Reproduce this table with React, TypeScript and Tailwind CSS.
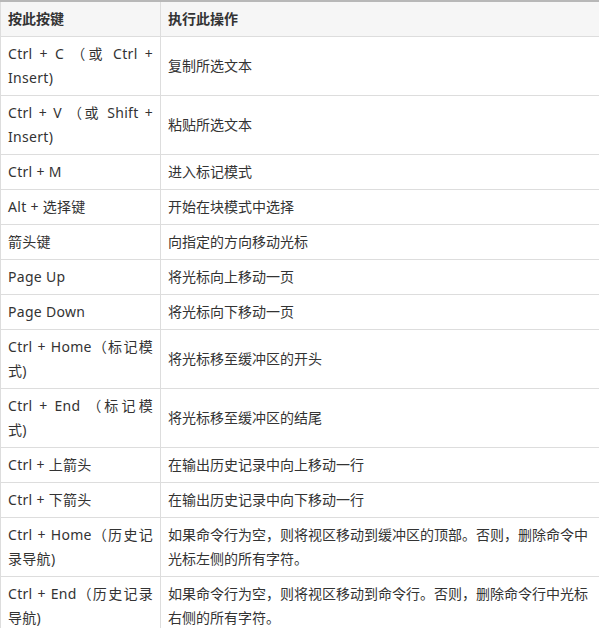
import React from 'react';

interface Shortcut {
  keys: string;
  action: string;
}

const shortcuts: Shortcut[] = [
  { keys: 'Ctrl + C （或 Ctrl + Insert)', action: '复制所选文本' },
  { keys: 'Ctrl + V （或 Shift + Insert)', action: '粘贴所选文本' },
  { keys: 'Ctrl + M', action: '进入标记模式' },
  { keys: 'Alt + 选择键', action: '开始在块模式中选择' },
  { keys: '箭头键', action: '向指定的方向移动光标' },
  { keys: 'Page Up', action: '将光标向上移动一页' },
  { keys: 'Page Down', action: '将光标向下移动一页' },
  { keys: 'Ctrl + Home（标记模式)', action: '将光标移至缓冲区的开头' },
  { keys: 'Ctrl + End （标记模式)', action: '将光标移至缓冲区的结尾' },
  { keys: 'Ctrl + 上箭头', action: '在输出历史记录中向上移动一行' },
  { keys: 'Ctrl + 下箭头', action: '在输出历史记录中向下移动一行' },
  {
    keys: 'Ctrl + Home（历史记录导航)',
    action: '如果命令行为空，则将视区移动到缓冲区的顶部。否则，删除命令中光标左侧的所有字符。',
  },
  {
    keys: 'Ctrl + End（历史记录导航)',
    action: '如果命令行为空，则将视区移动到命令行。否则，删除命令行中光标右侧的所有字符。',
  },
];

export default function App() {
  return (
    <div
      className="w-[599px] h-[628px] overflow-hidden bg-white text-[#333] text-[14px] leading-[24px]"
      style={{ fontFamily: '"Noto Sans", "Noto Sans CJK SC", sans-serif' }}
    >
      <table className="w-[599px] border-collapse table-fixed border-t-2 border-t-[#b8b8b8]">
        <colgroup>
          <col className="w-[160px]" />
          <col />
        </colgroup>
        <thead>
          <tr className="bg-[#f6f6f6]">
            <th className="border-l border-b border-r border-[#dddddd] px-[7px] py-[5px] text-left font-bold">
              按此按键
            </th>
            <th className="border-b border-[#dddddd] px-[7px] py-[5px] text-left font-bold">
              执行此操作
            </th>
          </tr>
        </thead>
        <tbody>
          {shortcuts.map((s) => (
            <tr key={s.keys}>
              <td className="border-l border-b border-r border-[#dddddd] px-[7px] py-[5px] align-middle text-justify tracking-[0.3px]">
                {s.keys}
              </td>
              <td className="border-b border-[#dddddd] pl-[7px] pr-[6px] py-[5px] align-middle">
                {s.action}
              </td>
            </tr>
          ))}
        </tbody>
      </table>
    </div>
  );
}
